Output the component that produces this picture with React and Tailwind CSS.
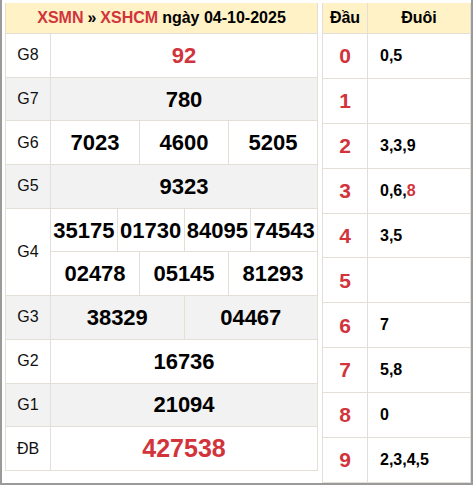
import React from "react";

const RED = "text-[#d2343b]";

function Row({ label, bg, children, h = "h-[43.7px]" }) {
  return (
    <div className={`flex ${h} border-t border-[#e3dfd6] ${bg}`}>
      <div className="w-[45px] shrink-0 border-r border-[#e3dfd6] flex items-center justify-center text-[16px] text-[#111]">
        {label}
      </div>
      <div className="flex-1 flex">{children}</div>
    </div>
  );
}

function Cell({ children, last, red, big, className = "" }) {
  return (
    <div
      className={`flex-1 flex items-center justify-center font-bold ${big ? "text-[25px]" : "text-[22px]"} ${red ? RED : "text-black"} ${last ? "" : "border-r border-[#e3dfd6]"} ${className}`}
    >
      {children}
    </div>
  );
}

const loto = [
  ["0", "0,5"],
  ["1", ""],
  ["2", "3,3,9"],
  ["3", "0,6,8"],
  ["4", "3,5"],
  ["5", ""],
  ["6", "7"],
  ["7", "5,8"],
  ["8", "0"],
  ["9", "2,3,4,5"],
];

export default function App() {
  return (
    <div
      className="w-[473px] h-[485px] bg-white border-l-2 border-r-2 border-b-2 border-[#9a9a9a] flex items-start pt-[3px] pl-[3px] gap-[4px]"
      style={{ fontFamily: '"Liberation Sans", Arial, sans-serif' }}
    >
      <div className="w-[313px] flex flex-col border border-[#e3dfd6] border-t-0">
        <div className="h-[30px] bg-[#fff2c6] flex items-center justify-center font-bold text-[16px] text-black">
          <span className={RED}>XSMN</span>
          <span className="mx-[4px]">»</span>
          <span className={RED}>XSHCM</span>
          <span className="ml-[4px]">ngày 04-10-2025</span>
        </div>
        <Row label="G8" bg="bg-white">
          <Cell last red>92</Cell>
        </Row>
        <Row label="G7" bg="bg-[#f2f2f2]">
          <Cell last>780</Cell>
        </Row>
        <Row label="G6" bg="bg-white">
          <Cell>7023</Cell>
          <Cell>4600</Cell>
          <Cell last>5205</Cell>
        </Row>
        <Row label="G5" bg="bg-[#f2f2f2]">
          <Cell last>9323</Cell>
        </Row>
        <div className="flex h-[87.4px] border-t border-[#e3dfd6] bg-white">
          <div className="w-[45px] shrink-0 border-r border-[#e3dfd6] flex items-center justify-center text-[16px] text-[#111]">
            G4
          </div>
          <div className="flex-1 flex flex-col">
            <div className="flex flex-1 border-b border-[#e3dfd6]">
              <Cell>35175</Cell>
              <Cell>01730</Cell>
              <Cell>84095</Cell>
              <Cell last>74543</Cell>
            </div>
            <div className="flex flex-1">
              <Cell>02478</Cell>
              <Cell>05145</Cell>
              <Cell last>81293</Cell>
            </div>
          </div>
        </div>
        <Row label="G3" bg="bg-[#f2f2f2]">
          <Cell>38329</Cell>
          <Cell last>04467</Cell>
        </Row>
        <Row label="G2" bg="bg-white">
          <Cell last>16736</Cell>
        </Row>
        <Row label="G1" bg="bg-[#f2f2f2]">
          <Cell last>21094</Cell>
        </Row>
        <Row label="ĐB" bg="bg-white">
          <Cell last red big>427538</Cell>
        </Row>
      </div>
      <div className="w-[149px] flex flex-col border border-[#e3dfd6] border-t-0">
        <div className="h-[30px] bg-[#fff2c6] flex font-bold text-[16px] text-black">
          <div className="w-[45px] border-r border-[#e3dfd6] flex items-center justify-center">Đầu</div>
          <div className="flex-1 flex items-center justify-center">Đuôi</div>
        </div>
        {loto.map(([d, t]) => (
          <div key={d} className="flex h-[44.9px] border-t border-[#e3dfd6] bg-white">
            <div className={`w-[45px] border-r border-[#e3dfd6] flex items-center justify-center font-bold text-[21px] ${RED}`}>
              {d}
            </div>
            <div className="flex-1 flex items-center pl-[12px] font-bold text-[16px] text-black">
              {d === "3" ? (
                <span>
                  0,6,<span className={RED}>8</span>
                </span>
              ) : (
                t
              )}
            </div>
          </div>
        ))}
      </div>
    </div>
  );
}
